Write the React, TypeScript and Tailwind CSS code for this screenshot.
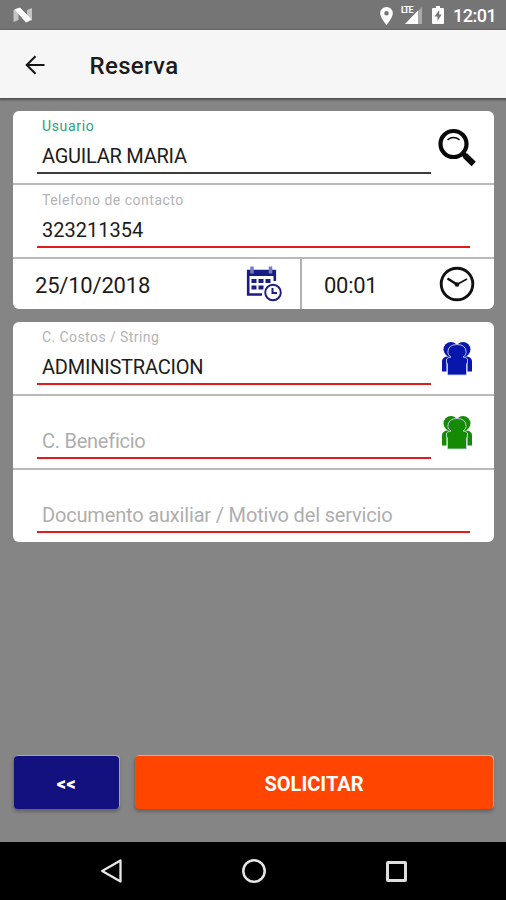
import type { ReactNode } from "react";

type FieldProps = {
  label?: string;
  labelClass?: string;
  value?: string;
  valueClass?: string;
  placeholder?: string;
  placeholderClass?: string;
  lineClass?: string;
  icon?: ReactNode;
  last?: boolean;
};

function Field({
  label,
  labelClass = "text-[#b4b4b4]",
  value,
  valueClass = "",
  placeholder,
  placeholderClass = "",
  lineClass = "border-[#e01c1c]",
  icon,
  last,
}: FieldProps) {
  return (
    <div className={`flex pl-6 ${last ? "h-[72px]" : "h-[74px] border-b-2 border-[#b9b9b9]"}`}>
      <div className={`flex h-[63px] flex-col border-b-2 pl-[5px] ${icon ? "w-[394px]" : "w-[433px]"} ${lineClass}`}>
        <div className={`h-[31px] pt-[5px] text-[14px] leading-5 whitespace-nowrap ${labelClass}`}>{label}</div>
        {value && (
          <div className={`text-[20px] leading-7 whitespace-nowrap text-[#1c1c1c] ${valueClass}`}>{value}</div>
        )}
        {placeholder && (
          <div className={`text-[20px] leading-7 whitespace-nowrap text-[#aeaeae] ${placeholderClass}`}>
            {placeholder}
          </div>
        )}
      </div>
      {icon}
    </div>
  );
}

function People({ className }: { className: string }) {
  return (
    <svg className={`mt-[19px] ml-[10px] h-[36px] w-[32px] ${className}`} viewBox="0 0 32 36" fill="currentColor">
      <circle cx="10" cy="8.500" r="7.500" />
      <circle cx="22" cy="8.500" r="7.500" />
      <path d="M1 20q.5-4 5-4.500h20q4.500.5 5 4.500v10.500h-4.500v-10h-21v10h-4.500z" />
      <path
        stroke="#ccd0ee"
        strokeWidth=".9"
        d="M6.500 34V23.500L5.500 21V18Q6.500 16.500 10 16Q6.800 14 6.800 11.500Q7 3.500 16 3.500T25.200 11.500Q25.200 14 22 16Q25.500 16.500 26.500 18V21L25.500 23.500V34z"
      />
    </svg>
  );
}

export default function App() {
  return (
    <div className="flex h-[900px] w-[506px] flex-col overflow-hidden bg-[#858585] font-['Roboto','Liberation_Sans',sans-serif] text-[#1c1c1c]">
      <div className="flex h-[30px] shrink-0 items-center bg-[#757575] text-white">
        <svg className="ml-[13px] h-4 w-5" viewBox="0 0 20 16">
          <path d="M.5 3l5-2v12l-5 2z" fill="#c4c4c4" />
          <path d="M14 3l5-2v12l-5 2z" fill="#c4c4c4" />
          <path d="M1.500 2.500L7 .5L18.500 12.500L13 15.500z" fill="#fff" />
        </svg>
        <svg className="mt-px ml-[347px] h-[18px] w-[13px]" viewBox="0 0 13 18">
          <path fill="#fff" fillRule="evenodd" d="M6.500 0A6.300 6.300 0 0 0 .2 6.300C.2 11 6.500 18 6.500 18S12.800 11 12.800 6.300A6.300 6.300 0 0 0 6.500 0zm0 4a2.300 2.300 0 1 1 0 4.600a2.300 2.300 0 0 1 0-4.600z" />
        </svg>
        <div className="relative ml-[8px] h-[18px] w-[21px]">
          <svg className="h-[18px] w-[21px]" viewBox="0 0 21 18">
            <path d="M4 18L21 1v17z" fill="#a9a9a9" />
            <path d="M4 18L17 4.500v13.500z" fill="#fff" />
          </svg>
          <span className="absolute top-0 left-0 text-[9px] leading-[9px] font-bold tracking-[-1px]">LTE</span>
        </div>
        <svg className="ml-[10px] h-[18px] w-[12px]" viewBox="0 0 12 18">
          <path fill="#fff" fillRule="evenodd" d="M4 0h4v2h3q1 0 1 1v14q0 1-1 1H1q-1 0-1-1V3q0-1 1-1h3zM7.200 4L2.500 10.500h3V15l4.200-6.500H7.200z" />
        </svg>
        <span className="mt-[2px] ml-[9px] text-[18px] leading-5 font-medium tracking-[-0.5px]">12:01</span>
      </div>
      <header className="z-10 flex h-[68px] shrink-0 items-center bg-[#f6f6f6] shadow-[0_1px_2px_1px_#4e504e]">
        <svg className="mt-[2px] ml-[25px] h-5 w-5" viewBox="0 0 20 20" fill="none" stroke="#151515" strokeWidth="2">
          <path d="M19.500 10H2M10.500 1.200L1.700 10L10.500 18.800" />
        </svg>
        <h1 className="mt-[4px] ml-[44.500px] text-[24px] leading-8 font-medium tracking-[0.35px]">Reserva</h1>
      </header>
      <main className="flex flex-1 flex-col px-[13px] pt-[13px]">
        <section className="h-[198px] w-[481px] overflow-hidden rounded-[6px] bg-white">
          <Field
            label="Usuario"
            labelClass="text-[#2ca082] tracking-[0.65px]"
            value="AGUILAR MARIA"
            valueClass="tracking-[-0.25px]"
            lineClass="border-[#3c3c3c]"
            icon={
              <svg className="mt-[17px] ml-[7px] h-[40px] w-[40px]" viewBox="0 0 40 40" fill="none" stroke="#080808">
                <circle cx="15.500" cy="16" r="13" strokeWidth="4.200" />
                <path d="M9.500 11.800q6-4.500 12 0" strokeWidth="1.500" />
                <path d="M24.500 25L28.500 29" strokeWidth="5" />
                <path d="M27 27.500L35.700 36" strokeWidth="6" />
              </svg>
            }
          />
          <Field label="Telefono de contacto" labelClass="text-[#b4b4b4] tracking-[0.5px]" value="323211354" />
          <div className="flex h-[50px]">
            <div className="flex w-[289px] items-center border-r-2 border-[#b0b0b0] pl-[22px]">
              <span className="mt-[3px] w-[211px] text-[22px] leading-7 tracking-[-0.2px]">25/10/2018</span>
              <svg className="h-9 w-9 shrink-0" viewBox="0 0 36 36" fill="none" stroke="#191c82">
                <path d="M16 28.500H2.200V5H28.800V15" strokeWidth="2.600" />
                <path d="M1 4h29v6H1z" fill="#191c82" stroke="none" />
                <path d="M6 .5v7M24.500 .5v7" stroke="#7779ba" strokeWidth="3.500" />
                <path d="M5.500 15h5M12.500 15h5M19.500 15h5M5.500 21.500h5M12.500 21.500h5" strokeWidth="4" />
                <circle cx="27" cy="26.500" r="10" fill="#fff" stroke="none" />
                <circle cx="27" cy="26.500" r="7.800" strokeWidth="1.900" />
                <path d="M26.500 22v5h4.500" strokeWidth="2" />
              </svg>
            </div>
            <div className="flex flex-1 items-center pl-[22px]">
              <span className="mt-[3px] w-[114.500px] text-[22px] leading-7 tracking-[-0.3px]">00:01</span>
              <svg className="h-9 w-9 shrink-0" viewBox="0 0 36 36" fill="none" stroke="#101010">
                <circle cx="18" cy="18" r="15.800" strokeWidth="2.900" />
                <path d="M8.500 12.500L18 18.500" strokeWidth="2.600" />
                <path d="M18 18.500L28 13" strokeWidth="1.500" />
                <circle cx="18" cy="18.500" r="2.300" fill="#101010" stroke="none" />
              </svg>
            </div>
          </div>
        </section>
        <section className="mt-[13px] h-[220px] w-[481px] overflow-hidden rounded-[6px] bg-white">
          <Field
            label="C. Costos / String"
            labelClass="text-[#b4b4b4] tracking-[0.42px]"
            value="ADMINISTRACION"
            valueClass="tracking-[-0.22px]"
            icon={<People className="text-[#0717ae]" />}
          />
          <Field
            placeholder="C. Beneficio"
            placeholderClass="tracking-[-0.25px]"
            icon={<People className="text-[#158a05]" />}
          />
          <Field
            placeholder="Documento auxiliar / Motivo del servicio"
            placeholderClass="tracking-[-0.17px]"
            last
          />
        </section>
        <div className="mt-[214px] flex gap-4">
          <button className="ml-px h-[53px] w-[105px] rounded-[4px] bg-[#131080] pt-[2px] text-[18px] font-black tracking-[0.6px] text-white shadow-[1px_-1px_1px_#aaa,0_2px_3px_1px_#666]">
            &lt;&lt;
          </button>
          <button className="h-[53px] w-[358px] rounded-[4px] bg-[#ff4500] pt-[2px] text-[20px] font-bold text-white shadow-[1px_-1px_1px_#bbb,0_2px_3px_1px_#666]">
            SOLICITAR
          </button>
        </div>
      </main>
      <nav className="flex h-[58px] shrink-0 items-center bg-black">
        <svg className="ml-[100px] h-6 w-[22px]" viewBox="0 0 22 24" fill="none" stroke="#e6e6e6" strokeWidth="2.300" strokeLinejoin="round">
          <path d="M2.200 12L20.500 1.500v21z" />
        </svg>
        <svg className="ml-[119.500px] h-6 w-6" viewBox="0 0 24 24" fill="none" stroke="#e6e6e6" strokeWidth="2.500">
          <circle cx="12" cy="12" r="10.700" />
        </svg>
        <span className="ml-[120px] h-[21px] w-[21px] rounded-[2px] border-[3px] border-[#dedede]" />
      </nav>
    </div>
  );
}
